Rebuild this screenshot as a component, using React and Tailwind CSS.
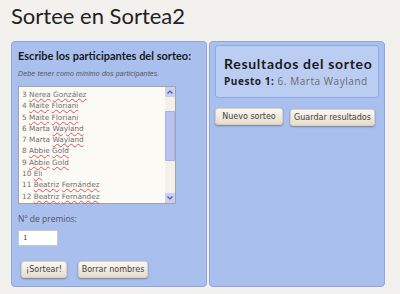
import React from "react";

const names = [
  ["3", [["Nerea", true], ["González", true]]],
  ["4", [["Maite", true], ["Floriani", true]]],
  ["5", [["Maite", true], ["Floriani", true]]],
  ["6", [["Marta", false], ["Wayland", true]]],
  ["7", [["Marta", false], ["Wayland", true]]],
  ["8", [["Abbie", true], ["Gold", true]]],
  ["9", [["Abbie", true], ["Gold", true]]],
  ["10", [["Eli", true]]],
  ["11", [["Beatriz", true], ["Fernández", true]]],
  ["12", [["Beatriz", true], ["Fernández", true]]],
];

const btn =
  "h-[17px] rounded-[3px] border border-[#d8cfbf] bg-gradient-to-b from-[#fbf8f2] to-[#e6dccb] shadow-[0_1px_2px_rgba(0,0,0,0.35)] text-[8px] text-[#444] leading-none flex items-center justify-center whitespace-nowrap";

const lato = { fontFamily: 'Lato, "Open Sans", sans-serif' };
const open = { fontFamily: '"Open Sans", sans-serif' };

export default function App() {
  return (
    <div
      className="w-[400px] h-[294px] bg-[#f3f1ee] overflow-hidden"
      style={{ fontFamily: '"DejaVu Sans", Verdana, sans-serif' }}
    >
      <div className="pl-[11px] pt-[3px] h-[41px] text-[22px] text-[#222] leading-[26px]" style={lato}>
        Sortee en Sortea2
      </div>
      <div className="flex pl-[11px] gap-[2px] h-[246px]">
        {/* left panel */}
        <div className="w-[196px] h-full rounded-[4px] border border-[#8ca6e2] bg-[#a9c0ef] pl-[6px] pt-[8px] flex flex-col">
          <div className="text-[11px] font-bold text-[#1a1a1a] leading-[12px] whitespace-nowrap" style={lato}>
            Escribe los participantes del sorteo:
          </div>
          <div
            className="mt-[8px] text-[7px] italic text-[#555] leading-[8px] whitespace-nowrap tracking-[0.15px]"
            style={{ fontFamily: '"Liberation Sans", Arial, sans-serif' }}
          >
            Debe tener como mínimo dos participantes.
          </div>
          <div className="mt-[8px] w-[158px] h-[118px] border border-[#a3a3a3] bg-[#fcfaf5] flex">
            <div className="flex-1 pl-[3px] pt-[2px]">
              {names.map(([n, ws]) => (
                <div key={n} className="h-[11.3px] text-[7.3px] text-[#707070] leading-[11px] whitespace-nowrap">
                  {n}{" "}
                  {ws.map(([w, u], i) => (
                    <span key={i}>
                      <span className={u ? "underline decoration-wavy decoration-[#e25050] decoration-[0.5px] underline-offset-[1px]" : ""}>{w}</span>
                      {i < ws.length - 1 ? " " : ""}
                    </span>
                  ))}
                </div>
              ))}
            </div>
            <div className="w-[10px] h-full bg-[#f2f0e8] flex flex-col">
              <div className="h-[10px] bg-[#c9d0f2] flex items-center justify-center">
                <svg width="6" height="4" viewBox="0 0 6 4"><path d="M0.5 3.5 L3 1 L5.5 3.5" stroke="#4b5bb0" strokeWidth="1.2" fill="none" /></svg>
              </div>
              <div className="mt-[14px] h-[50px] bg-[#b9c2f0] border border-[#a9b3e8]" />
              <div className="flex-1" />
              <div className="h-[10px] bg-[#c9d0f2] flex items-center justify-center">
                <svg width="6" height="4" viewBox="0 0 6 4"><path d="M0.5 0.5 L3 3 L5.5 0.5" stroke="#4b5bb0" strokeWidth="1.2" fill="none" /></svg>
              </div>
            </div>
          </div>
          <div className="mt-[10px] text-[8.5px] text-[#555] leading-[10px]" style={open}>Nº de premios:</div>
          <div className="mt-[6px] w-[40px] h-[16px] bg-white border border-[#c8c8c8] text-[7px] text-[#444] pl-[4px] leading-[15px]">1</div>
          <div className="mt-[15px] flex gap-[11px] pl-[3px]">
            <button className={btn + " w-[46px]"}>¡Sortear!</button>
            <button className={btn + " w-[70px]"}>Borrar nombres</button>
          </div>
        </div>
        {/* right panel */}
        <div className="w-[176px] h-full rounded-[4px] border border-[#8ca6e2] bg-[#a9c0ef] pl-[5px] pt-[3px] flex flex-col">
          <div className="w-[164px] h-[53px] rounded-[3px] border border-[#8fa9e2] bg-[#bccdf4] pl-[8px] pt-[10px]">
            <div className="text-[14px] font-bold text-[#1a1a1a] leading-[16px] whitespace-nowrap tracking-[0.7px]" style={lato}>
              Resultados del sorteo
            </div>
            <div className="mt-[3px] text-[10px] leading-[12px] text-[#6a6a6a] whitespace-nowrap tracking-[0.55px]" style={open}>
              <span className="font-bold text-[#222]">Puesto 1:</span> 6. Marta Wayland
            </div>
          </div>
          <div className="mt-[10px] flex gap-[7px]">
            <button className={btn + " w-[68px]"}>Nuevo sorteo</button>
            <button className={btn + " w-[85px] mt-[1px]"}>Guardar resultados</button>
          </div>
        </div>
      </div>
    </div>
  );
}
